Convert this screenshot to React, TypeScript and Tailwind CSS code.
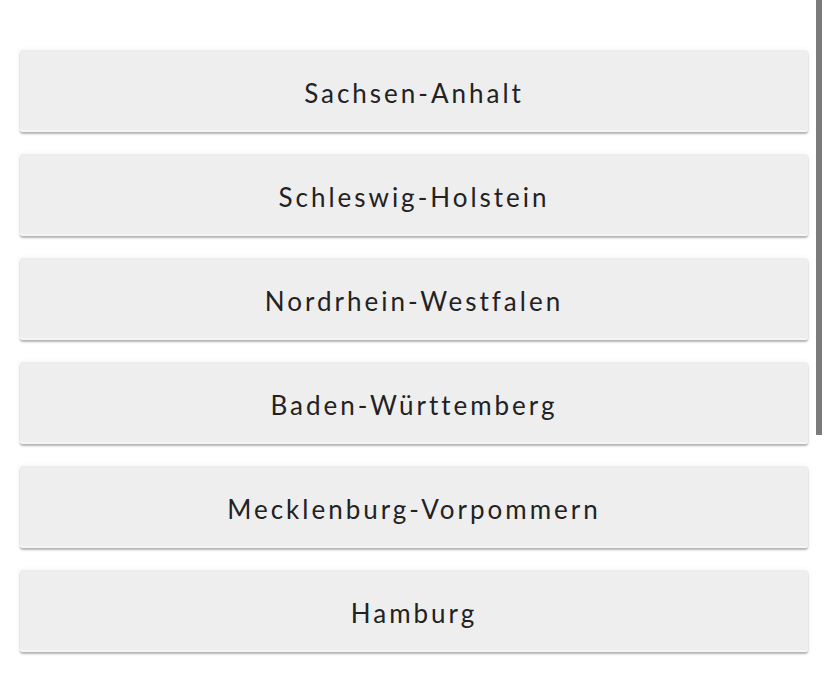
import React from "react";

const states = [
  "Sachsen-Anhalt",
  "Schleswig-Holstein",
  "Nordrhein-Westfalen",
  "Baden-Württemberg",
  "Mecklenburg-Vorpommern",
  "Hamburg",
];

export default function App() {
  return (
    <div className="relative w-[827px] h-[683px] bg-white overflow-hidden font-['Lato',sans-serif]">
      {/* list of buttons */}
      <div className="flex flex-col gap-[22px] pt-[50px] pl-[20px] w-[808px]">
        {states.map((name) => (
          <button
            key={name}
            className="h-[82px] w-full pt-[5px] rounded-[3px] bg-[#eeeeee] text-[26px] tracking-[0.115em] text-[#222222] shadow-[0_2px_2px_rgba(0,0,0,0.28),0_0_6px_rgba(0,0,0,0.06),inset_0_-2px_0_#f5f5f5] flex items-center justify-center"
          >
            {name}
          </button>
        ))}
      </div>

      {/* scrollbar thumb */}
      <div className="absolute top-0 left-[816px] w-[6px] h-[435px] bg-[#7b7b7b]" />
    </div>
  );
}
